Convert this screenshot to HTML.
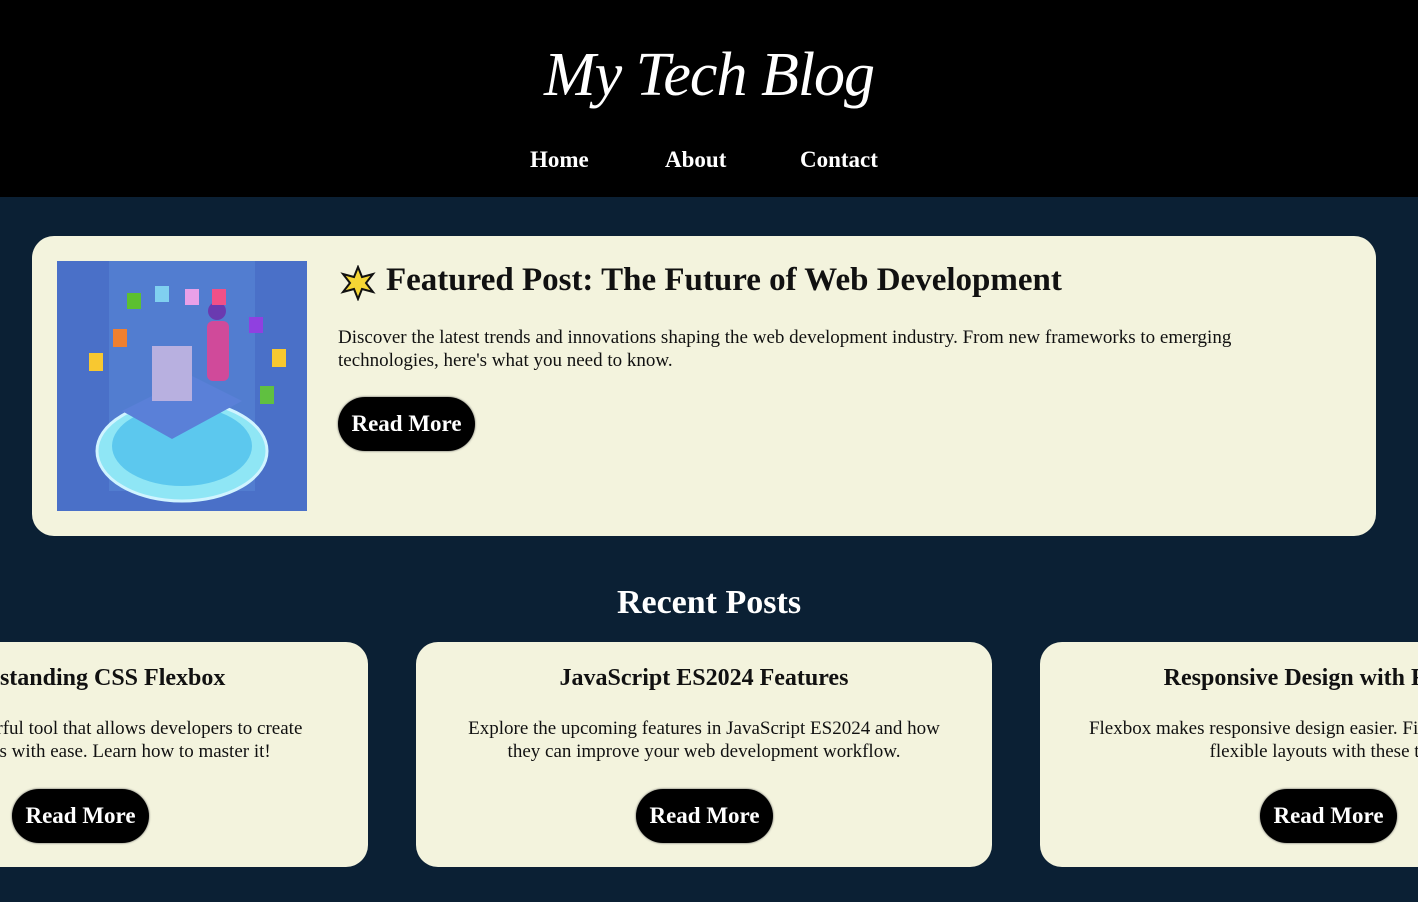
<!DOCTYPE html>
<html><head><meta charset="utf-8"><style>
*{margin:0;padding:0;box-sizing:border-box}
html,body{width:1418px;height:902px;overflow:hidden}
body{background:#0b2034;font-family:"Liberation Serif",serif;position:relative}
header{position:absolute;left:0;top:0;width:1418px;height:197px;background:#000;color:#fff}
.logo{position:absolute;top:40px;left:0;width:1418px;text-align:center;font-family:"Liberation Serif",serif;font-style:italic;font-size:62px;letter-spacing:-1px;color:#fff}
nav a{position:absolute;top:147px;color:#fff;font-weight:bold;font-size:23px;text-decoration:none}
.card{position:absolute;background:#f3f3dd;border-radius:22px;overflow:hidden}
.btn{position:absolute;background:#000;color:#fff;font-weight:bold;font-size:23px;border-radius:27px;height:54px;width:137px;line-height:54px;text-align:center;box-shadow:0 0 2px #555}
h2{position:absolute;font-weight:bold;color:#111}
p{position:absolute;font-size:19px;line-height:23px;color:#111}
</style></head><body>
<header>
<div class="logo">My Tech Blog</div>
<nav><a style="left:530px">Home</a><a style="left:665px">About</a><a style="left:800px">Contact</a></nav>
</header>
<div class="card" style="left:32px;top:236px;width:1344px;height:300px">
<svg style="position:absolute;left:25px;top:25px" width="250" height="250" viewBox="0 0 250 250">
<rect width="250" height="250" fill="#4a70c8"/>
<rect x="52" y="0" width="146" height="230" fill="#5a8ad8" opacity=".5"/>
<ellipse cx="125" cy="190" rx="85" ry="50" fill="#8fe6f5" stroke="#d0f4ff" stroke-width="3"/>
<ellipse cx="125" cy="185" rx="70" ry="40" fill="#5cc8ee"/>
<polygon points="65,150 135,115 185,140 115,178" fill="#5a80d8"/>
<rect x="95" y="85" width="40" height="55" fill="#b8b0e0"/>
<rect x="150" y="60" width="22" height="60" rx="6" fill="#d04a9a"/>
<circle cx="160" cy="50" r="9" fill="#6a3ab0"/>
<rect x="70" y="32" width="14" height="16" fill="#5cc030"/>
<rect x="98" y="25" width="14" height="16" fill="#80d0f0"/>
<rect x="128" y="28" width="14" height="16" fill="#e8a0e8"/>
<rect x="155" y="28" width="14" height="16" fill="#f05088"/>
<rect x="192" y="56" width="14" height="16" fill="#9040e0"/>
<rect x="56" y="68" width="14" height="18" fill="#f08030"/>
<rect x="32" y="92" width="14" height="18" fill="#f8c830"/>
<rect x="215" y="88" width="14" height="18" fill="#f8c830"/>
<rect x="203" y="125" width="14" height="18" fill="#60c040"/>
</svg>
<svg style="position:absolute;left:308px;top:29px" width="36" height="36" viewBox="0 0 36 36">
<path d="M18 2 L22 12 L33 9 L26 18 L33 27 L22 24 L18 34 L14 24 L3 27 L10 18 L3 9 L14 12 Z" fill="#f5d634" stroke="#111" stroke-width="2"/>
</svg>
<h2 style="left:354px;top:26px;font-size:33px">Featured Post: The Future of Web Development</h2>
<p style="left:306px;top:90px;width:960px">Discover the latest trends and innovations shaping the web development industry. From new frameworks to emerging technologies, here's what you need to know.</p>
<div class="btn" style="left:306px;top:161px">Read More</div>
</div>
<div style="position:absolute;top:584px;left:0;width:1418px;text-align:center;color:#fff;font-weight:bold;font-size:34px">Recent Posts</div>
<div class="card" style="left:-208px;top:642px;width:576px;height:225px">
<h2 style="left:0;width:576px;text-align:center;top:23px;font-size:24px">Understanding CSS Flexbox</h2>
<p style="left:40px;width:496px;text-align:center;top:75px">Flexbox is a powerful tool that allows developers to create flexible layouts with ease. Learn how to master it!</p>
<div class="btn" style="left:220px;top:147px">Read More</div>
</div>
<div class="card" style="left:416px;top:642px;width:576px;height:225px">
<h2 style="left:0;width:576px;text-align:center;top:23px;font-size:24px">JavaScript ES2024 Features</h2>
<p style="left:40px;width:496px;text-align:center;top:75px">Explore the upcoming features in JavaScript ES2024 and how they can improve your web development workflow.</p>
<div class="btn" style="left:220px;top:147px">Read More</div>
</div>
<div class="card" style="left:1040px;top:642px;width:576px;height:225px">
<h2 style="left:0;width:576px;text-align:center;top:23px;font-size:24px">Responsive Design with Flexbox</h2>
<p style="left:40px;width:496px;text-align:center;top:75px">Flexbox makes responsive design easier. Find out how to build flexible layouts with these tips.</p>
<div class="btn" style="left:220px;top:147px">Read More</div>
</div>
</body></html>
